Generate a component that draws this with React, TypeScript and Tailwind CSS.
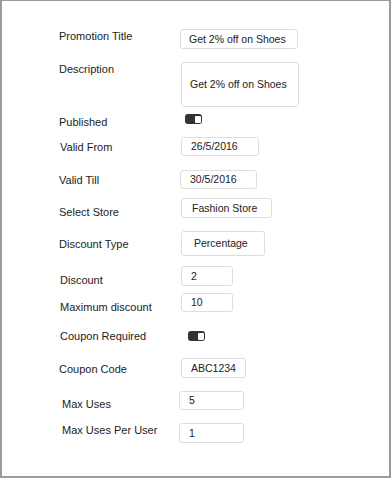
import React from "react";

const labelCls = "text-[11px] leading-[13px] text-[#222] pt-[1px]";
const inputCls =
  "border border-[#dedede] rounded-[3px] bg-white text-[10.5px] leading-[13px] text-[#222] flex items-center";

function Toggle() {
  return (
    <div className="w-[17px] h-[10px] rounded-[3px] bg-[#333] flex justify-end items-center pr-[1px]">
      <div className="w-[6px] h-[7px] bg-white rounded-[1px]" />
    </div>
  );
}

export default function App() {
  return (
    <div
      className="w-[391px] h-[478px] border-l-2 border-r-2 border-b-2 border-t border-[#9b9b9b] bg-white pt-[28px] flex flex-col"
      style={{ fontFamily: '"Liberation Sans", Arial, sans-serif' }}
    >
      {/* Promotion Title */}
      <div className="flex h-[33px] shrink-0">
        <div className={`w-[178px] pl-[57px] ${labelCls}`}>Promotion Title</div>
        <div className={`w-[118px] h-[20px] pl-[8px] ${inputCls}`}>Get 2% off on Shoes</div>
      </div>
      {/* Description */}
      <div className="flex h-[52px] shrink-0">
        <div className={`w-[178px] pl-[57px] ${labelCls}`}>Description</div>
        <div className={`ml-[1px] w-[118px] h-[45px] pl-[8px] ${inputCls}`}>Get 2% off on Shoes</div>
      </div>
      {/* Published */}
      <div className="flex h-[23px] shrink-0">
        <div className={`w-[178px] pl-[57px] mt-[1px] ${labelCls}`}>Published</div>
        <div className="ml-[5px]">
          <Toggle />
        </div>
      </div>
      {/* Valid From */}
      <div className="flex h-[33px] shrink-0">
        <div className={`w-[178px] pl-[58px] mt-[3px] ${labelCls}`}>Valid From</div>
        <div className={`ml-[1px] w-[78px] h-[19px] pl-[9px] ${inputCls}`}>26/5/2016</div>
      </div>
      {/* Valid Till */}
      <div className="flex h-[28px] shrink-0">
        <div className={`w-[178px] pl-[57px] mt-[3px] ${labelCls}`}>Valid Till</div>
        <div className={`w-[77px] h-[19px] pl-[9px] ${inputCls}`}>30/5/2016</div>
      </div>
      {/* Select Store */}
      <div className="flex h-[33px] shrink-0">
        <div className={`w-[178px] pl-[57px] mt-[7px] ${labelCls}`}>Select Store</div>
        <div className={`ml-[1px] w-[91px] h-[20px] pl-[10px] ${inputCls}`}>Fashion Store</div>
      </div>
      {/* Discount Type */}
      <div className="flex h-[35px] shrink-0">
        <div className={`w-[178px] pl-[57px] mt-[6px] ${labelCls}`}>Discount Type</div>
        <div className={`ml-[1px] w-[84px] h-[25px] pl-[12px] ${inputCls}`}>Percentage</div>
      </div>
      {/* Discount */}
      <div className="flex h-[27px] shrink-0">
        <div className={`w-[178px] pl-[58px] mt-[7px] ${labelCls}`}>Discount</div>
        <div className={`ml-[1px] w-[52px] h-[20px] pl-[9px] ${inputCls}`}>2</div>
      </div>
      {/* Maximum discount */}
      <div className="flex h-[36px] shrink-0">
        <div className={`w-[178px] pl-[58px] mt-[7px] ${labelCls}`}>Maximum discount</div>
        <div className={`ml-[1px] w-[52px] h-[19px] pl-[9px] ${inputCls}`}>10</div>
      </div>
      {/* Coupon Required */}
      <div className="flex h-[29px] shrink-0">
        <div className={`w-[178px] pl-[58px] ${labelCls}`}>Coupon Required</div>
        <div className="ml-[8px] mt-[2px]">
          <Toggle />
        </div>
      </div>
      {/* Coupon Code */}
      <div className="flex h-[33px] shrink-0">
        <div className={`w-[178px] pl-[57px] mt-[4px] ${labelCls}`}>Coupon Code</div>
        <div className={`ml-[1px] w-[65px] h-[20px] pl-[9px] ${inputCls}`}>ABC1234</div>
      </div>
      {/* Max Uses */}
      <div className="flex h-[32px] shrink-0">
        <div className={`w-[177px] pl-[60px] mt-[6px] ${labelCls}`}>Max Uses</div>
        <div className={`w-[65px] h-[19px] pl-[9px] ${inputCls}`}>5</div>
      </div>
      {/* Max Uses Per User */}
      <div className="flex h-[32px] shrink-0">
        <div className={`w-[177px] pl-[60px] ${labelCls}`}>Max Uses Per User</div>
        <div className={`w-[65px] h-[20px] pl-[9px] ${inputCls}`}>1</div>
      </div>
    </div>
  );
}
